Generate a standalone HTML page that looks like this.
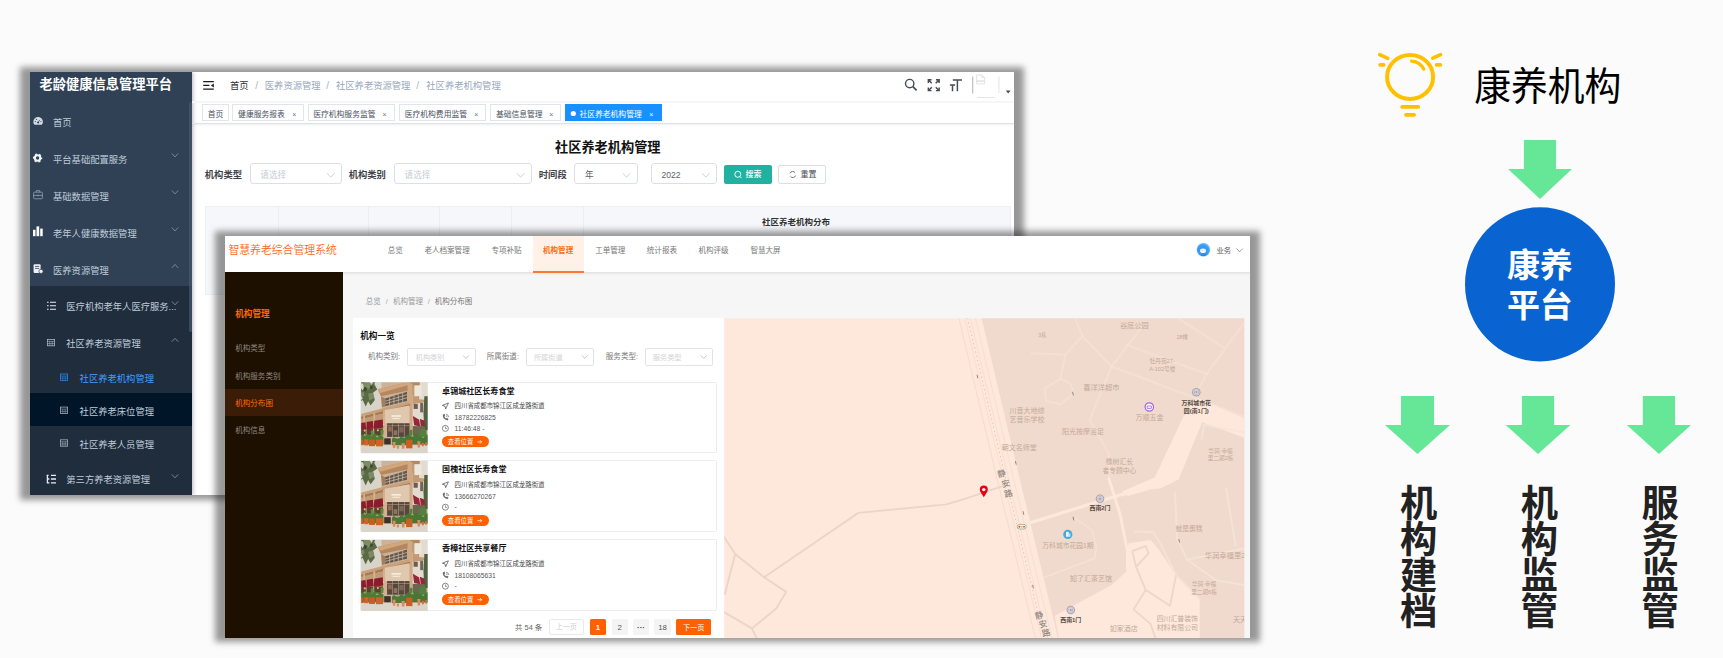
<!DOCTYPE html><html lang="zh-CN"><head><meta charset="utf-8"><title>康养机构</title><style>
*{box-sizing:border-box;margin:0;padding:0}
html,body{width:1723px;height:658px;overflow:hidden;background:#fbfbfb}
body{position:relative;font-family:"Liberation Sans","Noto Sans CJK SC",sans-serif;color:#303133}
.a{position:absolute}
.t{position:absolute;white-space:nowrap;line-height:1;transform:translateY(calc(-50% + .055em))}
.tc{position:absolute;white-space:nowrap;line-height:1;transform:translate(-50%,calc(-50% + .055em))}
.b{font-weight:700}
.sh{position:absolute;background:rgba(0,0,0,.395);filter:blur(3.2px)}
.win{position:absolute;overflow:hidden;background:#fff}
svg{position:absolute;overflow:visible}
</style></head><body>
<div class="sh" style="left:20px;top:67.4px;width:1004px;height:432.2px"></div>
<div class="win" style="left:30px;top:72px;width:984px;height:423px"><div class="a" style="left:-30px;top:-72px;width:1723px;height:658px">
<div class="a" style="left:30px;top:72px;width:161.8px;height:423px;background:#304156;box-shadow:1px 0 4px rgba(0,21,41,.30)"></div>
<div class="a" style="left:30px;top:286px;width:162px;height:209px;background:#1f2d3d"></div>
<div class="a" style="left:30px;top:393px;width:162px;height:33px;background:#001528"></div>
<div class="a" style="left:189px;top:102px;width:3px;height:230px;background:#46566b;border-radius:2px;opacity:.75"></div>
<div class="t b" style="left:39.6px;top:84.3px;font-size:13.25px;color:#fff;">老龄健康信息管理平台</div>
<div class="t" style="left:53px;top:122.5px;font-size:9.3px;color:#bfcbd9;">首页</div>
<div class="t" style="left:53px;top:159.5px;font-size:9.3px;color:#bfcbd9;">平台基础配置服务</div>
<div class="t" style="left:53px;top:196.5px;font-size:9.3px;color:#bfcbd9;">基础数据管理</div>
<div class="t" style="left:53px;top:233.5px;font-size:9.3px;color:#bfcbd9;">老年人健康数据管理</div>
<div class="t" style="left:53px;top:270.5px;font-size:9.3px;color:#bfcbd9;">医养资源管理</div>
<div class="t" style="left:66.3px;top:307.40000000000003px;font-size:9.3px;color:#bfcbd9;">医疗机构老年人医疗服务...</div>
<div class="t" style="left:66.3px;top:344.3px;font-size:9.3px;color:#bfcbd9;">社区养老资源管理</div>
<div class="t" style="left:79.6px;top:379.1px;font-size:9.3px;color:#409eff;">社区养老机构管理</div>
<div class="t" style="left:79.6px;top:412.3px;font-size:9.3px;color:#bfcbd9;">社区养老床位管理</div>
<div class="t" style="left:79.6px;top:445.0px;font-size:9.3px;color:#bfcbd9;">社区养老人员管理</div>
<div class="t" style="left:66.3px;top:480.40000000000003px;font-size:9.3px;color:#bfcbd9;">第三方养老资源管理</div>
<div class="a" style="left:192px;top:101.2px;width:822px;height:2px;background:linear-gradient(#f3f4f5,#f6f7f8)"></div>
<div class="a" style="left:192px;top:123.4px;width:822px;height:1px;background:#dfe2e7;box-shadow:0 1px 2px rgba(0,0,0,.10)"></div>
<div class="t" style="left:230px;top:86.3px;font-size:9.3px;color:#303133;">首页</div>
<div class="t" style="left:255.2px;top:86.3px;font-size:10.2px;color:#aeb3bb;">/</div>
<div class="t" style="left:264.8px;top:86.3px;font-size:9.3px;color:#97a8be;">医养资源管理</div>
<div class="t" style="left:326.2px;top:86.3px;font-size:10.2px;color:#aeb3bb;">/</div>
<div class="t" style="left:336px;top:86.3px;font-size:9.3px;color:#97a8be;">社区养老资源管理</div>
<div class="t" style="left:416.2px;top:86.3px;font-size:10.2px;color:#aeb3bb;">/</div>
<div class="t" style="left:426.3px;top:86.3px;font-size:9.3px;color:#97a8be;">社区养老机构管理</div>
<div class="a" style="left:202px;top:104.2px;width:27px;height:17px;border:1px solid #e1e4ea;background:#fff"></div>
<div class="t" style="left:207.7px;top:113.7px;font-size:7.8px;color:#495060;">首页</div>
<div class="a" style="left:232.4px;top:104.2px;width:72px;height:17px;border:1px solid #e1e4ea;background:#fff"></div>
<div class="t" style="left:238.1px;top:113.7px;font-size:7.8px;color:#495060;">健康服务报表</div>
<div class="t" style="left:292.2px;top:113.9px;font-size:7px;color:#6b7280;">×</div>
<div class="a" style="left:307.5px;top:104.2px;width:87.3px;height:17px;border:1px solid #e1e4ea;background:#fff"></div>
<div class="t" style="left:313.2px;top:113.7px;font-size:7.8px;color:#495060;">医疗机构服务监管</div>
<div class="t" style="left:382.6px;top:113.9px;font-size:7px;color:#6b7280;">×</div>
<div class="a" style="left:399px;top:104.2px;width:87.4px;height:17px;border:1px solid #e1e4ea;background:#fff"></div>
<div class="t" style="left:404.7px;top:113.7px;font-size:7.8px;color:#495060;">医疗机构费用监管</div>
<div class="t" style="left:474.2px;top:113.9px;font-size:7px;color:#6b7280;">×</div>
<div class="a" style="left:490.2px;top:104.2px;width:71.3px;height:17px;border:1px solid #e1e4ea;background:#fff"></div>
<div class="t" style="left:495.9px;top:113.7px;font-size:7.8px;color:#495060;">基础信息管理</div>
<div class="t" style="left:549.3px;top:113.9px;font-size:7px;color:#6b7280;">×</div>
<div class="a" style="left:565px;top:104.2px;width:96.8px;height:17px;background:#1890ff"></div>
<div class="t" style="left:579.4px;top:113.7px;font-size:7.8px;color:#fff;">社区养老机构管理</div>
<div class="t" style="left:649.2px;top:113.9px;font-size:7px;color:#fff;">×</div>
<div class="tc b" style="left:607.8px;top:146.8px;font-size:13.2px;color:#111;">社区养老机构管理</div>
<div class="t b" style="left:204.8px;top:174.7px;font-size:9.3px;color:#3f4349;">机构类型</div>
<div class="a" style="left:250.2px;top:163.4px;width:91.8px;height:21px;border:1px solid #dcdfe6;border-radius:3px;background:#fff"></div>
<div class="t" style="left:260.3px;top:174.8px;font-size:8.6px;color:#c8ccd4;">请选择</div>
<div class="t b" style="left:348.7px;top:174.7px;font-size:9.3px;color:#3f4349;">机构类别</div>
<div class="a" style="left:394.1px;top:163.4px;width:137.7px;height:21px;border:1px solid #dcdfe6;border-radius:3px;background:#fff"></div>
<div class="t" style="left:404.6px;top:174.8px;font-size:8.6px;color:#c8ccd4;">请选择</div>
<div class="t b" style="left:538.8px;top:174.7px;font-size:9.3px;color:#3f4349;">时间段</div>
<div class="a" style="left:574.4px;top:163.4px;width:63.3px;height:21px;border:1px solid #dcdfe6;border-radius:3px;background:#fff"></div>
<div class="t" style="left:584.9px;top:174.8px;font-size:8.6px;color:#606266;">年</div>
<div class="a" style="left:651.3px;top:163.4px;width:65.7px;height:21px;border:1px solid #dcdfe6;border-radius:3px;background:#fff"></div>
<div class="t" style="left:661.4px;top:174.8px;font-size:8.6px;color:#606266;">2022</div>
<div class="a" style="left:723.6px;top:165px;width:48.2px;height:18.8px;background:#21b1a0;border-radius:2px"></div>
<div class="t" style="left:745.6px;top:174.6px;font-size:8px;color:#fff;font-weight:500">搜索</div>
<div class="a" style="left:778.1px;top:165px;width:48.2px;height:18.8px;background:#fff;border:1px solid #dcdfe6;border-radius:2px"></div>
<div class="t" style="left:800.4px;top:174.6px;font-size:8px;color:#4a4d52;">重置</div>
<div class="a" style="left:205.2px;top:206.2px;width:805.6px;height:88.6px;background:#f5f7fa;border:1px solid #eef0f5"></div>
<div class="a" style="left:278.3px;top:206.2px;width:1px;height:88.6px;background:#ebeef5"></div>
<div class="a" style="left:367.7px;top:206.2px;width:1px;height:88.6px;background:#ebeef5"></div>
<div class="a" style="left:439.3px;top:206.2px;width:1px;height:88.6px;background:#ebeef5"></div>
<div class="a" style="left:510.5px;top:206.2px;width:1px;height:88.6px;background:#ebeef5"></div>
<div class="a" style="left:582.5px;top:206.2px;width:1px;height:88.6px;background:#ebeef5"></div>
<div class="tc b" style="left:796px;top:222px;font-size:8.5px;color:#303133;">社区养老机构分布</div>
<svg class="a" style="left:0;top:0" width="1723" height="658" viewBox="0 0 1723 658"><path d="M171.8,153.5 L175,156.89999999999998 L178.2,153.5" fill="none" stroke="#8d99a8" stroke-width="0.8"/><path d="M171.8,190.5 L175,193.89999999999998 L178.2,190.5" fill="none" stroke="#8d99a8" stroke-width="0.8"/><path d="M171.8,227.5 L175,230.89999999999998 L178.2,227.5" fill="none" stroke="#8d99a8" stroke-width="0.8"/><path d="M171.8,267.9 L175,264.5 L178.2,267.9" fill="none" stroke="#8d99a8" stroke-width="0.8"/><path d="M171.8,301.40000000000003 L175,304.8 L178.2,301.40000000000003" fill="none" stroke="#8d99a8" stroke-width="0.8"/><path d="M171.8,341.7 L175,338.3 L178.2,341.7" fill="none" stroke="#8d99a8" stroke-width="0.8"/><path d="M171.8,474.40000000000003 L175,477.8 L178.2,474.40000000000003" fill="none" stroke="#8d99a8" stroke-width="0.8"/><path d="M33.3,122 a4.8,5 0 0 1 9.6,0 q0,1.6 -1.2,2.8 h-7.2 q-1.2,-1.2 -1.2,-2.8 z" fill="#d3dbe5"/><circle cx="38.1" cy="122.4" r="1" fill="#304156"/><path d="M38.1,122.4 l1.8,-2.6" stroke="#304156" stroke-width=".7"/><circle cx="35.3" cy="121.6" r=".55" fill="#304156"/><circle cx="36.4" cy="119.4" r=".55" fill="#304156"/><circle cx="40.9" cy="121.6" r=".55" fill="#304156"/><circle cx="37.6" cy="158" r="2.7" fill="none" stroke="#eef2f6" stroke-width="2.1"/><circle cx="37.6" cy="158" r="4" fill="none" stroke="#eef2f6" stroke-width="1.3" stroke-dasharray="2.1 2.09" stroke-dashoffset="1"/><rect x="33.6" y="192.2" width="8.8" height="6.6" rx="1" fill="none" stroke="#93a1b3" stroke-width=".8"/><path d="M36.2,192.2 v-1.5 h3.6 v1.5 M33.6,195.4 h8.8 M38,194.5 v1.8" fill="none" stroke="#93a1b3" stroke-width=".8"/><rect x="33" y="229.8" width="2.5" height="6.4" fill="#fff"/><rect x="36.5" y="226.4" width="2.7" height="9.8" fill="#fff"/><rect x="40.2" y="228.6" width="2.5" height="7.6" fill="#fff"/><rect x="33.6" y="264.2" width="7" height="8.8" rx="1" fill="#eef2f6"/><path d="M35,266.4 h4.2 M35,268.4 h4.2" stroke="#304156" stroke-width=".8"/><circle cx="41" cy="271.4" r="2.1" fill="#eef2f6" stroke="#304156" stroke-width=".7"/><path d="M47,302.3 h1.6 M47,305.8 h1.6 M47,309.3 h1.6 M50,302.3 h6 M50,305.8 h6 M50,309.3 h6" stroke="#e6ebf1" stroke-width="1.1"/><rect x="47.4" y="339.40000000000003" width="7.2" height="6.4" fill="none" stroke="#aab6c4" stroke-width=".8"/><path d="M47.4,341.40000000000003 h7.2 M49.8,341.40000000000003 v4.4 M52.2,341.40000000000003 v4.4 M47.4,343.6 h7.2" stroke="#aab6c4" stroke-width=".6" fill="none"/><rect x="60.4" y="374.0" width="7.2" height="6.4" fill="none" stroke="#2f86e0" stroke-width=".8"/><path d="M60.4,376.0 h7.2 M62.8,376.0 v4.4 M65.2,376.0 v4.4 M60.4,378.2 h7.2" stroke="#2f86e0" stroke-width=".6" fill="none"/><rect x="60.4" y="407.1" width="7.2" height="6.4" fill="none" stroke="#9eabb9" stroke-width=".8"/><path d="M60.4,409.1 h7.2 M62.8,409.1 v4.4 M65.2,409.1 v4.4 M60.4,411.3 h7.2" stroke="#9eabb9" stroke-width=".6" fill="none"/><rect x="60.4" y="439.8" width="7.2" height="6.4" fill="none" stroke="#9eabb9" stroke-width=".8"/><path d="M60.4,441.8 h7.2 M62.8,441.8 v4.4 M65.2,441.8 v4.4 M60.4,444 h7.2" stroke="#9eabb9" stroke-width=".6" fill="none"/><path d="M46.6,475.3 h2 M47.4,475.3 v7.6 h2 M47.4,479 h2 M51,475.3 h5 M51,479 h5 M51,482.8 h5" stroke="#e6ebf1" stroke-width="1.3" fill="none"/><path d="M203.2,81.7 h10.6 M203.2,85.4 h6.2 M203.2,89.1 h10.6" stroke="#1a1a1a" stroke-width="1.3" fill="none"/><path d="M213.8,83.4 l-2.9,2 l2.9,2 z" fill="#1a1a1a"/><circle cx="909.7" cy="83.6" r="4.2" fill="none" stroke="#474c57" stroke-width="1.4"/><path d="M912.9,86.7 l3.7,3.6" stroke="#474c57" stroke-width="1.7"/><path d="M931.75,83.2 L928.55,80.0 M928.35,83.0 V79.8 H931.55 M935.75,83.2 L938.95,80.0 M939.15,83.0 V79.8 H935.95 M935.75,87.2 L938.95,90.4 M939.15,87.4 V90.60000000000001 H935.95 M931.75,87.2 L928.55,90.4 M928.35,87.4 V90.60000000000001 H931.55" stroke="#474c57" stroke-width="1.45" fill="none"/><path d="M952.8,80 h9.2 M957.4,80 v11.2 M949.9,85.1 h5.2 M952.5,85.1 v6.1" stroke="#474c57" stroke-width="1.5" fill="none"/><path d="M972.7,76.4 v17" stroke="#b9b9b9" stroke-width="1.1"/><path d="M998.9,76.4 v16.6" stroke="#e6e6e6" stroke-width="1.1"/><path d="M977.5,97.5 h17" stroke="#dedede" stroke-width=".8"/><path d="M976.6,75 h5.4 l2.6,2.6 v3.4 h-8 z M976.6,81.2 h8 v2.6 h-8 z M982,75 v2.6 h2.6" fill="none" stroke="#dcdcdc" stroke-width=".8"/><path d="M1005.8,90.5 h4.8 l-2.4,3 z" fill="#3f4a63"/><circle cx="573.3" cy="113.5" r="2.6" fill="#fff"/><path d="M327.12,173.24499999999998 L330.8,177.155 L334.48,173.24499999999998" fill="none" stroke="#c0c4cc" stroke-width="0.8"/><path d="M516.92,173.24499999999998 L520.5999999999999,177.155 L524.2799999999999,173.24499999999998" fill="none" stroke="#c0c4cc" stroke-width="0.8"/><path d="M622.8199999999999,173.24499999999998 L626.4999999999999,177.155 L630.1799999999998,173.24499999999998" fill="none" stroke="#c0c4cc" stroke-width="0.8"/><path d="M702.12,173.24499999999998 L705.8,177.155 L709.4799999999999,173.24499999999998" fill="none" stroke="#c0c4cc" stroke-width="0.8"/><circle cx="737.8" cy="174.3" r="3" fill="none" stroke="#fff" stroke-width=".95"/><path d="M740,176.5 l1.6,1.6" stroke="#fff" stroke-width=".95"/><path d="M790,173.4 a2.9,2.9 0 0 1 5.2,-.6 M795.6,175.6 a2.9,2.9 0 0 1 -5.2,.6" fill="none" stroke="#555" stroke-width=".8"/></svg>
</div></div>
<div class="sh" style="left:215px;top:230.9px;width:1045px;height:411.5px"></div>
<div class="win" style="left:225px;top:235.5px;width:1025px;height:402.3px;background:#f6f6f6"><div class="a" style="left:-225px;top:-235.5px;width:1723px;height:658px">
<div class="a" style="left:225px;top:272.4px;width:118.3px;height:366px;background:#1e1000"></div>
<div class="a" style="left:225px;top:389.2px;width:118.2px;height:27.3px;background:#3b1d07"></div>
<div class="t b" style="left:235.2px;top:314.2px;font-size:8.6px;color:#ff6a00;">机构管理</div>
<div class="t" style="left:235.2px;top:348.3px;font-size:7.55px;color:#8f8880;">机构类型</div>
<div class="t" style="left:235.2px;top:375.6px;font-size:7.55px;color:#8f8880;">机构服务类别</div>
<div class="t" style="left:235.2px;top:403.1px;font-size:7.55px;color:#ff6a00;">机构分布图</div>
<div class="t" style="left:235.2px;top:430.4px;font-size:7.55px;color:#8f8880;">机构信息</div>
<div class="a" style="left:225px;top:235.5px;width:1025px;height:36.9px;background:#fff;box-shadow:0 1px 3px rgba(0,0,0,.12)"></div>
<div class="t" style="left:228.4px;top:250px;font-size:10.85px;color:#ff6410;font-weight:350">智慧养老综合管理系统</div>
<div class="a" style="left:532.8px;top:235.5px;width:51.5px;height:37.5px;background:#fff1e8;border-bottom:2px solid #fb7a32"></div>
<div class="t" style="left:387.8px;top:249.8px;font-size:7.55px;color:#777;">总览</div>
<div class="t" style="left:424.4px;top:249.8px;font-size:7.55px;color:#777;">老人档案管理</div>
<div class="t" style="left:491.4px;top:249.8px;font-size:7.55px;color:#777;">专项补贴</div>
<div class="t b" style="left:543px;top:249.8px;font-size:7.55px;color:#ff6a00;">机构管理</div>
<div class="t" style="left:595.2px;top:249.8px;font-size:7.55px;color:#777;">工单管理</div>
<div class="t" style="left:646.8px;top:249.8px;font-size:7.55px;color:#777;">统计报表</div>
<div class="t" style="left:698.4px;top:249.8px;font-size:7.55px;color:#777;">机构评级</div>
<div class="t" style="left:750.4px;top:249.8px;font-size:7.55px;color:#777;">智慧大屏</div>
<div class="t" style="left:1216.4px;top:249.9px;font-size:7.4px;color:#555;">业务</div>
<div class="t" style="left:365.8px;top:300.7px;font-size:7.5px;color:#999;">总览</div>
<div class="t" style="left:385.8px;top:300.7px;font-size:7.5px;color:#aaa;">/</div>
<div class="t" style="left:393px;top:300.7px;font-size:7.5px;color:#999;">机构管理</div>
<div class="t" style="left:427.7px;top:300.7px;font-size:7.5px;color:#aaa;">/</div>
<div class="t" style="left:434.7px;top:300.7px;font-size:7.5px;color:#777;">机构分布图</div>
<div class="a" style="left:353px;top:318.2px;width:371.2px;height:320px;background:#fff"></div>
<div class="t b" style="left:360.2px;top:336.1px;font-size:8.65px;color:#111;">机构一览</div>
<div class="t" style="left:367.9px;top:356.4px;font-size:7.55px;color:#777;">机构类别:</div>
<div class="a" style="left:407.4px;top:348.2px;width:68.2px;height:17.4px;border:1px solid #e3e3e3;border-radius:2px;background:#fff"></div>
<div class="t" style="left:415.7px;top:356.6px;font-size:7.2px;color:#d4d4d4;">机构类别</div>
<div class="t" style="left:486.7px;top:356.4px;font-size:7.55px;color:#777;">所属街道:</div>
<div class="a" style="left:525.6px;top:348.2px;width:68.8px;height:17.4px;border:1px solid #e3e3e3;border-radius:2px;background:#fff"></div>
<div class="t" style="left:533.9px;top:356.6px;font-size:7.2px;color:#d4d4d4;">所属街道</div>
<div class="t" style="left:605.8px;top:356.4px;font-size:7.55px;color:#777;">服务类型:</div>
<div class="a" style="left:644.5px;top:348.2px;width:68.8px;height:17.4px;border:1px solid #e3e3e3;border-radius:2px;background:#fff"></div>
<div class="t" style="left:652.8px;top:356.6px;font-size:7.2px;color:#d4d4d4;">服务类型</div>
<div class="a" style="left:360.4px;top:381.6px;width:356.2px;height:71.8px;border:1px solid #ececec;border-radius:1.5px;background:#fff"></div>
<div class="t b" style="left:442.1px;top:391.6px;font-size:8.05px;color:#111;">卓锦城社区长寿食堂</div>
<div class="t" style="left:454.6px;top:406.1px;font-size:6.43px;color:#444;">四川省成都市锦江区成龙路街道</div>
<div class="t" style="left:454.6px;top:417.8px;font-size:6.72px;color:#555;">18782226825</div>
<div class="t" style="left:454.6px;top:428.5px;font-size:6.75px;color:#555;">11:46:48 -</div>
<div class="a" style="left:442.1px;top:436.0px;width:46.9px;height:11.4px;border-radius:6px;background:#ff6000"></div>
<div class="t" style="left:447.8px;top:441.8px;font-size:6.4px;color:#fff;">查看位置</div>
<div class="a" style="left:360.4px;top:460.4px;width:356.2px;height:71.8px;border:1px solid #ececec;border-radius:1.5px;background:#fff"></div>
<div class="t b" style="left:442.1px;top:470.4px;font-size:8.05px;color:#111;">国槐社区长寿食堂</div>
<div class="t" style="left:454.6px;top:484.9px;font-size:6.43px;color:#444;">四川省成都市锦江区成龙路街道</div>
<div class="t" style="left:454.6px;top:496.59999999999997px;font-size:6.72px;color:#555;">13666270267</div>
<div class="t" style="left:454.6px;top:507.29999999999995px;font-size:6.75px;color:#555;">-</div>
<div class="a" style="left:442.1px;top:514.8px;width:46.9px;height:11.4px;border-radius:6px;background:#ff6000"></div>
<div class="t" style="left:447.8px;top:520.6px;font-size:6.4px;color:#fff;">查看位置</div>
<div class="a" style="left:360.4px;top:539.4px;width:356.2px;height:71.8px;border:1px solid #ececec;border-radius:1.5px;background:#fff"></div>
<div class="t b" style="left:442.1px;top:549.4px;font-size:8.05px;color:#111;">香樟社区共享餐厅</div>
<div class="t" style="left:454.6px;top:563.9px;font-size:6.43px;color:#444;">四川省成都市锦江区成龙路街道</div>
<div class="t" style="left:454.6px;top:575.6px;font-size:6.72px;color:#555;">18108065631</div>
<div class="t" style="left:454.6px;top:586.3px;font-size:6.75px;color:#555;">-</div>
<div class="a" style="left:442.1px;top:593.8px;width:46.9px;height:11.4px;border-radius:6px;background:#ff6000"></div>
<div class="t" style="left:447.8px;top:599.6px;font-size:6.4px;color:#fff;">查看位置</div>
<div class="t" style="left:515.1px;top:626.9px;font-size:7.4px;color:#666;">共 54 条</div>
<div class="a" style="left:548.9px;top:619px;width:34.8px;height:16px;border:1px solid #e9e9e9;border-radius:2px;background:#fff"></div>
<div class="tc" style="left:566.3px;top:627.1px;font-size:7.1px;color:#cfcfcf;">上一页</div>
<div class="a" style="left:589.6px;top:619px;width:16.4px;height:16px;border-radius:1.5px;background:#ff6000"></div>
<div class="tc b" style="left:597.8000000000001px;top:627.1px;font-size:7.8px;color:#fff;">1</div>
<div class="a" style="left:611.6px;top:619px;width:16.2px;height:16px;border-radius:1.5px;background:#f4f4f5"></div>
<div class="tc" style="left:619.7px;top:627.1px;font-size:7.8px;color:#555;">2</div>
<div class="a" style="left:632.8px;top:619px;width:16.4px;height:16px;border-radius:1.5px;background:#f4f4f5"></div>
<div class="tc b" style="left:641.0px;top:627.1px;font-size:7.8px;color:#444;">···</div>
<div class="a" style="left:654.4px;top:619px;width:16.4px;height:16px;border-radius:1.5px;background:#f4f4f5"></div>
<div class="tc" style="left:662.6px;top:627.1px;font-size:7.8px;color:#555;">18</div>
<div class="a" style="left:676.3px;top:619px;width:34.8px;height:16px;border-radius:1.5px;background:#ff6000"></div>
<div class="tc" style="left:693.7px;top:627.1px;font-size:7.2px;color:#fff;">下一页</div>
<svg class="a" style="left:0;top:0" width="1723" height="658" viewBox="0 0 1723 658"><defs><radialGradient id="av" cx=".45" cy=".55" r=".6"><stop offset="0" stop-color="#2f8ff0"/><stop offset=".7" stop-color="#3d9df5"/><stop offset="1" stop-color="#8fd3ff"/></radialGradient></defs><circle cx="1203.5" cy="249.7" r="7.6" fill="#f6f8fb"/><circle cx="1203.5" cy="249.7" r="6.7" fill="url(#av)"/><ellipse cx="1203" cy="250.7" rx="3" ry="2.3" fill="#f4f8ff"/><path d="M1200.2,254 q3,1.6 6,-.2 l-.8,1.4 q-2.2,1 -4.2,0 z" fill="#2476d8"/><path d="M1201.4,250.4 h1 M1203.8,250.4 h1" stroke="#9db9e8" stroke-width=".5"/><path d="M1236.56,248.58499999999998 L1239.6,251.815 L1242.6399999999999,248.58499999999998" fill="none" stroke="#888" stroke-width="0.8"/><path d="M463.11999999999995,355.37 L465.99999999999994,358.42999999999995 L468.87999999999994,355.37" fill="none" stroke="#b9b9b9" stroke-width="0.8"/><path d="M581.92,355.37 L584.8,358.42999999999995 L587.68,355.37" fill="none" stroke="#b9b9b9" stroke-width="0.8"/><path d="M700.8199999999999,355.37 L703.6999999999999,358.42999999999995 L706.5799999999999,355.37" fill="none" stroke="#b9b9b9" stroke-width="0.8"/><defs><filter id="pb" x="-5%" y="-5%" width="110%" height="110%"><feGaussianBlur stdDeviation="3.2"/></filter><clipPath id="pc"><rect x="42" y="35" width="548" height="583"/></clipPath></defs><g transform="translate(361.1,382.3) scale(0.12158) translate(-42,-35)"><g clip-path="url(#pc)"><g filter="url(#pb)">
<rect x="20" y="10" width="600" height="640" fill="#cbb298"/>
<rect x="20" y="10" width="190" height="300" fill="#d9d4c9"/>
<rect x="455" y="10" width="160" height="420" fill="#e2dbcf"/>
<path d="M20,10 H170 L150,50 175,95 140,120 155,180 120,225 100,190 80,235 55,180 20,205 z" fill="#5a6a46"/><path d="M20,60 l30,-20 25,30 -20,30z M110,20 l30,10 -10,30 -25,-5z M20,150 l25,-10 10,30 -20,15z" fill="#d9d4c9"/>
<path d="M60,40 l40,-20 30,35 -25,40 -40,5 z M100,130 l40,-10 10,45 -40,20z M40,120 l25,-5 5,30 -25,10z" fill="#7e8c63"/>
<path d="M70,70 l25,15 -15,25 -20,-10z M120,60 l20,10 -8,22 -18,-8z" fill="#3a4a30"/>
<path d="M178,92 L445,30 H525 L518,178 L425,105 L205,150 z" fill="#b5875f"/>
<path d="M178,92 L445,30 L452,52 L200,122 z" fill="#d2a67d"/>
<path d="M240,168 L420,112 V188 L240,232 z" fill="#62574e"/>
<path d="M240,190 L420,137 M240,211 L420,163 M276,157 V224 M312,146 V215 M348,135 V206 M384,124 V197" stroke="#cdbca6" stroke-width="6"/>
<path d="M205,150 L240,168 V232 L215,240 z" fill="#a87c58"/>
<path d="M424,45 h42 V470 h-42 z" fill="#cfa985"/>
<path d="M466,40 L520,175 L560,178 V200 L466,215 z" fill="#c39a73"/>
<rect x="474" y="214" width="34" height="40" fill="#6d5b4e"/><rect x="528" y="204" width="24" height="78" fill="#75645a"/>
<rect x="480" y="60" width="60" height="90" fill="#ece6db"/>
<path d="M562,150 h40 v280 h-40 q-14,-140 0,-280z" fill="#4f6240"/>
<path d="M30,298 L430,194 L445,214 L30,320 z" fill="#c9a078"/>
<path d="M30,320 L445,214 V232 L30,345 z" fill="#a67a56"/>
<path d="M235,262 L440,226 V372 H235 z" fill="#dfc8ad"/>
<rect x="292" y="306" width="78" height="13" fill="#f6efe4"/><rect x="300" y="328" width="60" height="10" fill="#f2e9dc"/>
<path d="M30,340 L235,290 V470 H30 z" fill="#c29a76"/>
<path d="M60,310 l14,-4 v160 h-14z M142,292 l16,-4 v180 h-16z M222,272 l16,-4 v200 h-16z" fill="#d5b08c"/>
<path d="M30,372 l48,-8 6,58 H30 z M88,362 l52,-9 4,62 -58,8 z M150,352 l70,-12 4,68 -78,12 z" fill="#8b1e2f"/>
<path d="M30,420 h50 v50 h-50z M88,420 h52 v48 h-52z M150,416 h72 v52 h-72z" fill="#5b4033"/>
<circle cx="72" cy="432" r="9" fill="#e9b36a"/><circle cx="180" cy="430" r="9" fill="#e9b36a"/><circle cx="228" cy="380" r="7" fill="#f0c27a"/>
<rect x="256" y="372" width="184" height="112" fill="#56463c"/>
<path d="M256,392 h184 M300,372 v112 M350,372 v112 M398,372 v112" stroke="#a8927c" stroke-width="6"/>
<rect x="264" y="400" width="30" height="40" fill="#9a6a4c"/><rect x="356" y="404" width="36" height="44" fill="#7d6654"/><rect x="310" y="430" width="30" height="40" fill="#8a7462"/>
<path d="M468,312 l52,30 8,56 -50,-10 z M526,336 l36,14 10,52 -40,-6 z" fill="#98283a"/>
<rect x="466" y="395" width="100" height="80" fill="#6a6650"/>
<rect x="20" y="552" width="600" height="90" fill="#dad4cb"/>
<path d="M30,480 q20,-24 46,-4 q20,-28 48,-2 q24,-30 56,-4 q24,-10 46,14 v60 H30 z" fill="#4e7a35"/>
<path d="M120,440 q14,-22 26,0 l-4,40 h-18z M200,430 q16,-16 28,4 l-4,36 h-20z" fill="#5d8a40"/>
<path d="M296,500 q16,-22 34,-2 q10,-14 24,0 q14,-26 38,-6 q14,-10 20,10 v50 h-116z" fill="#4c7a38"/>
<path d="M404,486 q24,-40 58,-8 q20,-30 50,-4 q26,-34 60,-8 q20,-6 30,10 v70 H404 z" fill="#4a7636"/>
<path d="M440,440 q10,-30 24,-4 l-2,40 h-20z M520,430 q30,-30 60,0 v50 h-60z" fill="#55803c"/>
<path d="M60,470 l10,-14 12,14z M160,486 l14,-16 14,16z M450,480 l14,-18 14,18z M540,492 l12,-14 12,14z M330,500 l10,-12 10,12z" fill="#8fb562"/>
<rect x="30" y="506" width="32" height="46" fill="#c75a20"/><rect x="68" y="504" width="34" height="50" fill="#d0642a"/><rect x="108" y="506" width="48" height="54" fill="#c85c22"/><rect x="164" y="506" width="58" height="56" fill="#cf6228"/>
<rect x="232" y="496" width="54" height="50" fill="#3a322c"/>
<path d="M300,526 h26 l-4,50 h-18z M374,536 h28 l-4,46 h-20z M334,556 h22 l-3,26 h-16z" fill="#de8a5e"/>
<rect x="412" y="508" width="52" height="70" fill="#cb5f24"/>
<path d="M504,520 h26 l-4,52 h-18z" fill="#dd875a"/><path d="M540,534 h20 l-3,28 h-14z M566,530 h20 l-3,26 h-14z" fill="#cf6d3c"/>
</g></g></g><path d="M448.4,403.0 l-6,2.4 2.6,.8 .7,2.7 z" fill="none" stroke="#444" stroke-width=".7" stroke-linejoin="round"/><path d="M442.79999999999995,414.8 q-.5,4 4.6,5.6 l1.2,-1.4 -1.6,-1.1 -.9,.6 q-1.4,-.8 -1.7,-2.4 l.8,-.6 -.8,-1.7 z" fill="#6a6a6a"/><path d="M446.0,414.40000000000003 a3,3 0 0 1 2.8,2.8 M446.0,416.0 a1.4,1.4 0 0 1 1.3,1.3" fill="none" stroke="#555" stroke-width=".6"/><circle cx="445.4" cy="428.40000000000003" r="3" fill="none" stroke="#555" stroke-width=".7"/><path d="M445.4,426.6 v2 h1.6" fill="none" stroke="#555" stroke-width=".6"/><path d="M477.4,441.90000000000003 h4.2 M480,440.20000000000005 l1.7,1.7 -1.7,1.7" fill="none" stroke="#fff" stroke-width=".7"/><g transform="translate(361.1,461.1) scale(0.12158) translate(-42,-35)"><g clip-path="url(#pc)"><g filter="url(#pb)">
<rect x="20" y="10" width="600" height="640" fill="#cbb298"/>
<rect x="20" y="10" width="190" height="300" fill="#d9d4c9"/>
<rect x="455" y="10" width="160" height="420" fill="#e2dbcf"/>
<path d="M20,10 H170 L150,50 175,95 140,120 155,180 120,225 100,190 80,235 55,180 20,205 z" fill="#5a6a46"/><path d="M20,60 l30,-20 25,30 -20,30z M110,20 l30,10 -10,30 -25,-5z M20,150 l25,-10 10,30 -20,15z" fill="#d9d4c9"/>
<path d="M60,40 l40,-20 30,35 -25,40 -40,5 z M100,130 l40,-10 10,45 -40,20z M40,120 l25,-5 5,30 -25,10z" fill="#7e8c63"/>
<path d="M70,70 l25,15 -15,25 -20,-10z M120,60 l20,10 -8,22 -18,-8z" fill="#3a4a30"/>
<path d="M178,92 L445,30 H525 L518,178 L425,105 L205,150 z" fill="#b5875f"/>
<path d="M178,92 L445,30 L452,52 L200,122 z" fill="#d2a67d"/>
<path d="M240,168 L420,112 V188 L240,232 z" fill="#62574e"/>
<path d="M240,190 L420,137 M240,211 L420,163 M276,157 V224 M312,146 V215 M348,135 V206 M384,124 V197" stroke="#cdbca6" stroke-width="6"/>
<path d="M205,150 L240,168 V232 L215,240 z" fill="#a87c58"/>
<path d="M424,45 h42 V470 h-42 z" fill="#cfa985"/>
<path d="M466,40 L520,175 L560,178 V200 L466,215 z" fill="#c39a73"/>
<rect x="474" y="214" width="34" height="40" fill="#6d5b4e"/><rect x="528" y="204" width="24" height="78" fill="#75645a"/>
<rect x="480" y="60" width="60" height="90" fill="#ece6db"/>
<path d="M562,150 h40 v280 h-40 q-14,-140 0,-280z" fill="#4f6240"/>
<path d="M30,298 L430,194 L445,214 L30,320 z" fill="#c9a078"/>
<path d="M30,320 L445,214 V232 L30,345 z" fill="#a67a56"/>
<path d="M235,262 L440,226 V372 H235 z" fill="#dfc8ad"/>
<rect x="292" y="306" width="78" height="13" fill="#f6efe4"/><rect x="300" y="328" width="60" height="10" fill="#f2e9dc"/>
<path d="M30,340 L235,290 V470 H30 z" fill="#c29a76"/>
<path d="M60,310 l14,-4 v160 h-14z M142,292 l16,-4 v180 h-16z M222,272 l16,-4 v200 h-16z" fill="#d5b08c"/>
<path d="M30,372 l48,-8 6,58 H30 z M88,362 l52,-9 4,62 -58,8 z M150,352 l70,-12 4,68 -78,12 z" fill="#8b1e2f"/>
<path d="M30,420 h50 v50 h-50z M88,420 h52 v48 h-52z M150,416 h72 v52 h-72z" fill="#5b4033"/>
<circle cx="72" cy="432" r="9" fill="#e9b36a"/><circle cx="180" cy="430" r="9" fill="#e9b36a"/><circle cx="228" cy="380" r="7" fill="#f0c27a"/>
<rect x="256" y="372" width="184" height="112" fill="#56463c"/>
<path d="M256,392 h184 M300,372 v112 M350,372 v112 M398,372 v112" stroke="#a8927c" stroke-width="6"/>
<rect x="264" y="400" width="30" height="40" fill="#9a6a4c"/><rect x="356" y="404" width="36" height="44" fill="#7d6654"/><rect x="310" y="430" width="30" height="40" fill="#8a7462"/>
<path d="M468,312 l52,30 8,56 -50,-10 z M526,336 l36,14 10,52 -40,-6 z" fill="#98283a"/>
<rect x="466" y="395" width="100" height="80" fill="#6a6650"/>
<rect x="20" y="552" width="600" height="90" fill="#dad4cb"/>
<path d="M30,480 q20,-24 46,-4 q20,-28 48,-2 q24,-30 56,-4 q24,-10 46,14 v60 H30 z" fill="#4e7a35"/>
<path d="M120,440 q14,-22 26,0 l-4,40 h-18z M200,430 q16,-16 28,4 l-4,36 h-20z" fill="#5d8a40"/>
<path d="M296,500 q16,-22 34,-2 q10,-14 24,0 q14,-26 38,-6 q14,-10 20,10 v50 h-116z" fill="#4c7a38"/>
<path d="M404,486 q24,-40 58,-8 q20,-30 50,-4 q26,-34 60,-8 q20,-6 30,10 v70 H404 z" fill="#4a7636"/>
<path d="M440,440 q10,-30 24,-4 l-2,40 h-20z M520,430 q30,-30 60,0 v50 h-60z" fill="#55803c"/>
<path d="M60,470 l10,-14 12,14z M160,486 l14,-16 14,16z M450,480 l14,-18 14,18z M540,492 l12,-14 12,14z M330,500 l10,-12 10,12z" fill="#8fb562"/>
<rect x="30" y="506" width="32" height="46" fill="#c75a20"/><rect x="68" y="504" width="34" height="50" fill="#d0642a"/><rect x="108" y="506" width="48" height="54" fill="#c85c22"/><rect x="164" y="506" width="58" height="56" fill="#cf6228"/>
<rect x="232" y="496" width="54" height="50" fill="#3a322c"/>
<path d="M300,526 h26 l-4,50 h-18z M374,536 h28 l-4,46 h-20z M334,556 h22 l-3,26 h-16z" fill="#de8a5e"/>
<rect x="412" y="508" width="52" height="70" fill="#cb5f24"/>
<path d="M504,520 h26 l-4,52 h-18z" fill="#dd875a"/><path d="M540,534 h20 l-3,28 h-14z M566,530 h20 l-3,26 h-14z" fill="#cf6d3c"/>
</g></g></g><path d="M448.4,481.79999999999995 l-6,2.4 2.6,.8 .7,2.7 z" fill="none" stroke="#444" stroke-width=".7" stroke-linejoin="round"/><path d="M442.79999999999995,493.59999999999997 q-.5,4 4.6,5.6 l1.2,-1.4 -1.6,-1.1 -.9,.6 q-1.4,-.8 -1.7,-2.4 l.8,-.6 -.8,-1.7 z" fill="#6a6a6a"/><path d="M446.0,493.2 a3,3 0 0 1 2.8,2.8 M446.0,494.79999999999995 a1.4,1.4 0 0 1 1.3,1.3" fill="none" stroke="#555" stroke-width=".6"/><circle cx="445.4" cy="507.2" r="3" fill="none" stroke="#555" stroke-width=".7"/><path d="M445.4,505.4 v2 h1.6" fill="none" stroke="#555" stroke-width=".6"/><path d="M477.4,520.6999999999999 h4.2 M480,519.0 l1.7,1.7 -1.7,1.7" fill="none" stroke="#fff" stroke-width=".7"/><g transform="translate(361.1,540.1) scale(0.12158) translate(-42,-35)"><g clip-path="url(#pc)"><g filter="url(#pb)">
<rect x="20" y="10" width="600" height="640" fill="#cbb298"/>
<rect x="20" y="10" width="190" height="300" fill="#d9d4c9"/>
<rect x="455" y="10" width="160" height="420" fill="#e2dbcf"/>
<path d="M20,10 H170 L150,50 175,95 140,120 155,180 120,225 100,190 80,235 55,180 20,205 z" fill="#5a6a46"/><path d="M20,60 l30,-20 25,30 -20,30z M110,20 l30,10 -10,30 -25,-5z M20,150 l25,-10 10,30 -20,15z" fill="#d9d4c9"/>
<path d="M60,40 l40,-20 30,35 -25,40 -40,5 z M100,130 l40,-10 10,45 -40,20z M40,120 l25,-5 5,30 -25,10z" fill="#7e8c63"/>
<path d="M70,70 l25,15 -15,25 -20,-10z M120,60 l20,10 -8,22 -18,-8z" fill="#3a4a30"/>
<path d="M178,92 L445,30 H525 L518,178 L425,105 L205,150 z" fill="#b5875f"/>
<path d="M178,92 L445,30 L452,52 L200,122 z" fill="#d2a67d"/>
<path d="M240,168 L420,112 V188 L240,232 z" fill="#62574e"/>
<path d="M240,190 L420,137 M240,211 L420,163 M276,157 V224 M312,146 V215 M348,135 V206 M384,124 V197" stroke="#cdbca6" stroke-width="6"/>
<path d="M205,150 L240,168 V232 L215,240 z" fill="#a87c58"/>
<path d="M424,45 h42 V470 h-42 z" fill="#cfa985"/>
<path d="M466,40 L520,175 L560,178 V200 L466,215 z" fill="#c39a73"/>
<rect x="474" y="214" width="34" height="40" fill="#6d5b4e"/><rect x="528" y="204" width="24" height="78" fill="#75645a"/>
<rect x="480" y="60" width="60" height="90" fill="#ece6db"/>
<path d="M562,150 h40 v280 h-40 q-14,-140 0,-280z" fill="#4f6240"/>
<path d="M30,298 L430,194 L445,214 L30,320 z" fill="#c9a078"/>
<path d="M30,320 L445,214 V232 L30,345 z" fill="#a67a56"/>
<path d="M235,262 L440,226 V372 H235 z" fill="#dfc8ad"/>
<rect x="292" y="306" width="78" height="13" fill="#f6efe4"/><rect x="300" y="328" width="60" height="10" fill="#f2e9dc"/>
<path d="M30,340 L235,290 V470 H30 z" fill="#c29a76"/>
<path d="M60,310 l14,-4 v160 h-14z M142,292 l16,-4 v180 h-16z M222,272 l16,-4 v200 h-16z" fill="#d5b08c"/>
<path d="M30,372 l48,-8 6,58 H30 z M88,362 l52,-9 4,62 -58,8 z M150,352 l70,-12 4,68 -78,12 z" fill="#8b1e2f"/>
<path d="M30,420 h50 v50 h-50z M88,420 h52 v48 h-52z M150,416 h72 v52 h-72z" fill="#5b4033"/>
<circle cx="72" cy="432" r="9" fill="#e9b36a"/><circle cx="180" cy="430" r="9" fill="#e9b36a"/><circle cx="228" cy="380" r="7" fill="#f0c27a"/>
<rect x="256" y="372" width="184" height="112" fill="#56463c"/>
<path d="M256,392 h184 M300,372 v112 M350,372 v112 M398,372 v112" stroke="#a8927c" stroke-width="6"/>
<rect x="264" y="400" width="30" height="40" fill="#9a6a4c"/><rect x="356" y="404" width="36" height="44" fill="#7d6654"/><rect x="310" y="430" width="30" height="40" fill="#8a7462"/>
<path d="M468,312 l52,30 8,56 -50,-10 z M526,336 l36,14 10,52 -40,-6 z" fill="#98283a"/>
<rect x="466" y="395" width="100" height="80" fill="#6a6650"/>
<rect x="20" y="552" width="600" height="90" fill="#dad4cb"/>
<path d="M30,480 q20,-24 46,-4 q20,-28 48,-2 q24,-30 56,-4 q24,-10 46,14 v60 H30 z" fill="#4e7a35"/>
<path d="M120,440 q14,-22 26,0 l-4,40 h-18z M200,430 q16,-16 28,4 l-4,36 h-20z" fill="#5d8a40"/>
<path d="M296,500 q16,-22 34,-2 q10,-14 24,0 q14,-26 38,-6 q14,-10 20,10 v50 h-116z" fill="#4c7a38"/>
<path d="M404,486 q24,-40 58,-8 q20,-30 50,-4 q26,-34 60,-8 q20,-6 30,10 v70 H404 z" fill="#4a7636"/>
<path d="M440,440 q10,-30 24,-4 l-2,40 h-20z M520,430 q30,-30 60,0 v50 h-60z" fill="#55803c"/>
<path d="M60,470 l10,-14 12,14z M160,486 l14,-16 14,16z M450,480 l14,-18 14,18z M540,492 l12,-14 12,14z M330,500 l10,-12 10,12z" fill="#8fb562"/>
<rect x="30" y="506" width="32" height="46" fill="#c75a20"/><rect x="68" y="504" width="34" height="50" fill="#d0642a"/><rect x="108" y="506" width="48" height="54" fill="#c85c22"/><rect x="164" y="506" width="58" height="56" fill="#cf6228"/>
<rect x="232" y="496" width="54" height="50" fill="#3a322c"/>
<path d="M300,526 h26 l-4,50 h-18z M374,536 h28 l-4,46 h-20z M334,556 h22 l-3,26 h-16z" fill="#de8a5e"/>
<rect x="412" y="508" width="52" height="70" fill="#cb5f24"/>
<path d="M504,520 h26 l-4,52 h-18z" fill="#dd875a"/><path d="M540,534 h20 l-3,28 h-14z M566,530 h20 l-3,26 h-14z" fill="#cf6d3c"/>
</g></g></g><path d="M448.4,560.8 l-6,2.4 2.6,.8 .7,2.7 z" fill="none" stroke="#444" stroke-width=".7" stroke-linejoin="round"/><path d="M442.79999999999995,572.6 q-.5,4 4.6,5.6 l1.2,-1.4 -1.6,-1.1 -.9,.6 q-1.4,-.8 -1.7,-2.4 l.8,-.6 -.8,-1.7 z" fill="#6a6a6a"/><path d="M446.0,572.1999999999999 a3,3 0 0 1 2.8,2.8 M446.0,573.8 a1.4,1.4 0 0 1 1.3,1.3" fill="none" stroke="#555" stroke-width=".6"/><circle cx="445.4" cy="586.1999999999999" r="3" fill="none" stroke="#555" stroke-width=".7"/><path d="M445.4,584.4 v2 h1.6" fill="none" stroke="#555" stroke-width=".6"/><path d="M477.4,599.6999999999999 h4.2 M480,598.0 l1.7,1.7 -1.7,1.7" fill="none" stroke="#fff" stroke-width=".7"/><clipPath id="mc"><rect x="724.2" y="318.2" width="520.0999999999999" height="319.8"/></clipPath><g clip-path="url(#mc)"><rect x="724.2" y="318.2" width="520.0999999999999" height="319.8" fill="#fee8dc"/><path d="M981.5,318 L1019.5,478 L1058,638 H1250 V318 z" fill="#f0dacd"/><path d="M1128.7,543.2 L1150.5,540.0 L1158.3,549.0 L1176.1,575.3 L1199.7,599.6 L1199.7,641.0 L1059.3,641.0 L1054.7,615.7 L1111.6,585.0 L1127.4,570.4 L1126.2,551.0 z" fill="#fee8dc"/><path d="M1196.7,397.4 L1247.8,419.6 L1247.8,439.0 L1202.2,422.2 L1178.5,479.5 L1160.2,488.6 L1150,489.5 L1128,496 L1122,491.5 L1154.7,477.6 L1184.8,413.8 z" fill="#fee8dc"/><path d="M1028.4,523.2 L1116.5,496.0 L1153.0,486.3 L1165.1,480.4" fill="none" stroke="#fee8dc" stroke-width="3.2"/><path d="M1108.7,478.0 L1120.1,514.5 L1127.4,551.0 L1127.4,570.4" fill="none" stroke="#fee8dc" stroke-width="2.8"/><path d="M1043.5,577.7 L1094.6,558.3 L1096.5,548.5" fill="none" stroke="#f6e1d5" stroke-width="1.6"/><path d="M1075.1,518.1 L1092.2,530.3 L1096.5,548.5" fill="none" stroke="#f6e1d5" stroke-width="1.4"/><path d="M1075.1,318.0 L1082.4,336.2 L1111.6,366.6 L1244.2,416.5" fill="none" stroke="#f6e3d8" stroke-width="2.2" stroke-linejoin="round" stroke-linecap="round" opacity=".6"/><path d="M1031.4,353.3 L1065.4,354.5 L1082.4,336.2" fill="none" stroke="#f6e3d8" stroke-width="2.2" stroke-linejoin="round" stroke-linecap="round" opacity=".6"/><path d="M1065.4,354.5 L1060.5,378.8 L1070.3,383.7 L1073.9,393.4 L1060.5,404.4 L1045.9,400.7 L1044.7,388.5 L1060.5,378.8" fill="none" stroke="#f6e3d8" stroke-width="2.2" stroke-linejoin="round" stroke-linecap="round" opacity=".6"/><path d="M1143.2,325.3 L1111.6,366.6 L1089.7,420.2 L1109.2,454.2 L1108.7,478.1" fill="none" stroke="#f6e3d8" stroke-width="2.2" stroke-linejoin="round" stroke-linecap="round" opacity=".6"/><path d="M1126.2,344.8 L1206.5,373.9 L1244.2,322.9" fill="none" stroke="#f6e3d8" stroke-width="2.2" stroke-linejoin="round" stroke-linecap="round" opacity=".6"/><path d="M1177.3,318.0 L1223.5,347.2" fill="none" stroke="#f6e3d8" stroke-width="2.2" stroke-linejoin="round" stroke-linecap="round" opacity=".6"/><path d="M1206.5,373.9 L1198.0,391.0" fill="none" stroke="#f6e3d8" stroke-width="2.2" stroke-linejoin="round" stroke-linecap="round" opacity=".6"/><path d="M1133.5,531.5 L1153.0,532.0 L1159.1,541.2 L1176.1,575.3 L1199.7,599.6" fill="none" stroke="#f6e4d9" stroke-width="2" stroke-linejoin="round" opacity=".8"/><path d="M1174.9,492.6 L1177.3,538.8 L1187.0,559.5 L1244.2,548.5" fill="none" stroke="#f6e4d9" stroke-width="2" stroke-linejoin="round" opacity=".8"/><path d="M1187.0,559.5 L1216.2,580.2 L1244.2,585.0" fill="none" stroke="#f6e4d9" stroke-width="2" stroke-linejoin="round" opacity=".8"/><path d="M1226.0,487.7 L1235.7,546.1" fill="none" stroke="#f6e4d9" stroke-width="2" stroke-linejoin="round" opacity=".8"/><path d="M1201.6,439.6 L1204.1,425.0 L1244.2,432.3" fill="none" stroke="#f6e4d9" stroke-width="2" stroke-linejoin="round" opacity=".8"/><path d="M1132.3,551.0 L1145.7,546.1 L1148.6,553.4 L1136.0,566.8 L1132.3,551.0" fill="none" stroke="#ecd7c9" stroke-width="1.9" stroke-linejoin="round"/><path d="M1136.0,566.8 L1145.7,589.9 L1170.0,605.7 L1176.1,575.3" fill="none" stroke="#ecd7c9" stroke-width="1.9" stroke-linejoin="round"/><path d="M1145.7,589.9 L1133.5,609.4 L1150.5,623.9 L1155.4,638.1" fill="none" stroke="#ecd7c9" stroke-width="1.9" stroke-linejoin="round"/><path d="M958.9,318 L996.9,478 L1035.4,638" fill="none" stroke="#f3d9cb" stroke-width=".9"/><path d="M964.9,318 L1002.9,478 L1041.4,638" fill="none" stroke="#f6ddd0" stroke-width=".9"/><path d="M970.3,318 L1008.3,478 L1046.8,638" fill="none" stroke="#f6ddd0" stroke-width=".9"/><path d="M975.4,318 L1013.4,478 L1051.9,638" fill="none" stroke="#f5dccf" stroke-width=".9"/><path d="M967.6,318 L1005.6,478 L1044.1,638" fill="none" stroke="#dfc3b6" stroke-width="1" stroke-dasharray="1.3 3"/><path d="M1004.1,485.6 L963.1,499.3 L946.4,504.4 L858.3,512.9 L764.1,577.3 L735.2,554 L722,534" fill="none" stroke="#ead5c7" stroke-width="1.9" stroke-linejoin="round"/><path d="M764.1,577.3 L786.2,591.9 L776.2,608.6 L751.9,628.4 L722,611" fill="none" stroke="#ead5c7" stroke-width="1.9" stroke-linejoin="round"/><path d="M735.2,554 L724.6,595" fill="none" stroke="#ead5c7" stroke-width="1.9" stroke-linejoin="round"/><path d="M751.9,628.4 L757.5,640" fill="none" stroke="#ead5c7" stroke-width="1.9" stroke-linejoin="round"/><g font-family="'Liberation Sans','Noto Sans CJK SC',sans-serif"><text x="1134.3" y="325.8" font-size="7.2" fill="#c2a999" font-weight="400" text-anchor="middle" dominant-baseline="central" >谷底公园</text><text x="1042.3" y="335" font-size="5.2" fill="#c2a999" font-weight="400" text-anchor="middle" dominant-baseline="central" >3栋</text><text x="1182.2" y="336.7" font-size="5.2" fill="#c2a999" font-weight="400" text-anchor="middle" dominant-baseline="central" >28幢</text><text x="1162.2" y="361" font-size="5.6" fill="#c2a999" font-weight="400" text-anchor="middle" dominant-baseline="central" >牡丹苑27-</text><text x="1162.2" y="368.6" font-size="5.6" fill="#c2a999" font-weight="400" text-anchor="middle" dominant-baseline="central" >A-102号楼</text><text x="1101.4" y="387.1" font-size="7.3" fill="#c2a999" font-weight="400" text-anchor="middle" dominant-baseline="central" >喜洋洋超市</text><text x="1027" y="410.7" font-size="7" fill="#c2a999" font-weight="400" text-anchor="middle" dominant-baseline="central" >川音大地综</text><text x="1027" y="419.2" font-size="7" fill="#c2a999" font-weight="400" text-anchor="middle" dominant-baseline="central" >艺音乐学校</text><text x="1082.9" y="431.4" font-size="7" fill="#c2a999" font-weight="400" text-anchor="middle" dominant-baseline="central" >阳光按摩浴足</text><text x="1019.2" y="447.7" font-size="7" fill="#c2a999" font-weight="400" text-anchor="middle" dominant-baseline="central" >朝文名师堂</text><text x="1119.4" y="461" font-size="6.8" fill="#c2a999" font-weight="400" text-anchor="middle" dominant-baseline="central" >橡树汇长</text><text x="1119.4" y="470.8" font-size="6.8" fill="#c2a999" font-weight="400" text-anchor="middle" dominant-baseline="central" >者专顾中心</text><text x="1220.6" y="450.6" font-size="5.6" fill="#c2a999" font-weight="400" text-anchor="middle" dominant-baseline="central" >华润·幸福</text><text x="1220.6" y="458.4" font-size="5.6" fill="#c2a999" font-weight="400" text-anchor="middle" dominant-baseline="central" >里二期2栋</text><text x="1189" y="528.6" font-size="6.8" fill="#c2a999" font-weight="400" text-anchor="middle" dominant-baseline="central" >就是蛋糕</text><text x="1225" y="555.8" font-size="7.3" fill="#c2a999" font-weight="400" text-anchor="middle" dominant-baseline="central" >华润幸福里2</text><text x="1204" y="584" font-size="5.6" fill="#c2a999" font-weight="400" text-anchor="middle" dominant-baseline="central" >华润·幸福</text><text x="1204" y="591.8" font-size="5.6" fill="#c2a999" font-weight="400" text-anchor="middle" dominant-baseline="central" >里二期6栋</text><text x="1091" y="578" font-size="7" fill="#c2a999" font-weight="400" text-anchor="middle" dominant-baseline="central" >知了汇茶艺馆</text><text x="1123.8" y="628.3" font-size="7" fill="#c2a999" font-weight="400" text-anchor="middle" dominant-baseline="central" >如家酒店</text><text x="1177.3" y="618.4" font-size="6.9" fill="#c2a999" font-weight="400" text-anchor="middle" dominant-baseline="central" >四川汇普装饰</text><text x="1177.3" y="627.1" font-size="6.9" fill="#c2a999" font-weight="400" text-anchor="middle" dominant-baseline="central" >材料有限公司</text><text x="1240" y="619" font-size="7" fill="#c2a999" font-weight="400" text-anchor="middle" dominant-baseline="central" >天天</text><text x="1149.5" y="417.7" font-size="7" fill="#c2a999" font-weight="400" text-anchor="middle" dominant-baseline="central" >万顺五金</text><text x="1068" y="545" font-size="6.8" fill="#c2a999" font-weight="400" text-anchor="middle" dominant-baseline="central" >万科城市花园1期</text><text x="1196.3" y="402.6" font-size="5.9" fill="#554a42" font-weight="700" text-anchor="middle" dominant-baseline="central" >万科城市花</text><text x="1196.3" y="411.2" font-size="5.9" fill="#554a42" font-weight="700" text-anchor="middle" dominant-baseline="central" >园(南1门)</text><text x="1100" y="508.2" font-size="5.9" fill="#554a42" font-weight="700" text-anchor="middle" dominant-baseline="central" >西南2门</text><text x="1070.8" y="619.8" font-size="5.9" fill="#554a42" font-weight="700" text-anchor="middle" dominant-baseline="central" >西南1门</text><text x="1001.7" y="473.7" font-size="8.4" fill="#8f8780" font-weight="500" text-anchor="middle" dominant-baseline="central" transform="rotate(-14 1001.7 473.7)">静</text><text x="1005.8" y="483.6" font-size="8.4" fill="#8f8780" font-weight="500" text-anchor="middle" dominant-baseline="central" transform="rotate(-14 1005.8 483.6)">安</text><text x="1008.4" y="493.6" font-size="8.4" fill="#8f8780" font-weight="500" text-anchor="middle" dominant-baseline="central" transform="rotate(-14 1008.4 493.6)">路</text><text x="1039" y="615.4" font-size="8.4" fill="#8f8780" font-weight="500" text-anchor="middle" dominant-baseline="central" transform="rotate(-14 1039 615.4)">静</text><text x="1043.2" y="624.2" font-size="8.4" fill="#8f8780" font-weight="500" text-anchor="middle" dominant-baseline="central" transform="rotate(-14 1043.2 624.2)">安</text><text x="1046" y="632.8" font-size="8.4" fill="#8f8780" font-weight="500" text-anchor="middle" dominant-baseline="central" transform="rotate(-14 1046 632.8)">路</text></g><circle cx="1196.3" cy="392.2" r="4.3" fill="#a9a3ad"/><circle cx="1196.3" cy="392.2" r="2.9" fill="none" stroke="#efe9ee" stroke-width=".7"/><rect x="1195.1" y="390.7" width="2.4" height="3" fill="none" stroke="#efe9ee" stroke-width=".6"/><circle cx="1100" cy="498.7" r="4.3" fill="#a9a3ad"/><circle cx="1100" cy="498.7" r="2.9" fill="none" stroke="#efe9ee" stroke-width=".7"/><rect x="1098.8" y="497.2" width="2.4" height="3" fill="none" stroke="#efe9ee" stroke-width=".6"/><circle cx="1070.8" cy="610" r="4.3" fill="#a9a3ad"/><circle cx="1070.8" cy="610" r="2.9" fill="none" stroke="#efe9ee" stroke-width=".7"/><rect x="1069.6" y="608.5" width="2.4" height="3" fill="none" stroke="#efe9ee" stroke-width=".6"/><circle cx="1149.3" cy="407" r="4.2" fill="#fff" stroke="#a85fd8" stroke-width="1.2"/><path d="M1147.2,406 h4.2 v2.4 h-4.2 z" fill="none" stroke="#a85fd8" stroke-width=".8"/><circle cx="1067.8" cy="534.4" r="4.6" fill="#45a9dc"/><rect x="1066" y="531.8" width="2.8" height="5" fill="#e8f6ff"/><rect x="1068.8" y="533.4" width="1.6" height="3.4" fill="#bfe4f8"/><rect x="1017.2" y="524.4" width="9" height="4.6" rx="2.3" fill="#fff7e6" stroke="#8a8578" stroke-width=".6"/><circle cx="1019.4" cy="526.7" r="1" fill="#e9483c"/><circle cx="1021.7" cy="526.7" r="1" fill="#f1bd2e"/><circle cx="1024" cy="526.7" r="1" fill="#4caf50"/><path d="M977,374.7 l.8,3.6" stroke="#6d5d55" stroke-width=".7"/><path d="M1072.6,391.8 l.8,3.6" stroke="#6d5d55" stroke-width=".7"/><path d="M1015.4,461.0 l.8,3.6" stroke="#6d5d55" stroke-width=".7"/><path d="M1023,511.2 l.8,3.6" stroke="#6d5d55" stroke-width=".7"/><path d="M1032.6,584.8000000000001 l.8,3.6" stroke="#6d5d55" stroke-width=".7"/><path d="M1178.8,539.0 l.8,3.6" stroke="#6d5d55" stroke-width=".7"/><path d="M1073,516.8000000000001 l.8,3.6" stroke="#6d5d55" stroke-width=".7"/><path d="M983.8,497.2 C981.6,493.6 979.8,492 979.8,489.6 a4,4 0 0 1 8,0 C987.8,492 986,493.6 983.8,497.2 z" fill="#e60012"/><circle cx="983.8" cy="489.6" r="1.7" fill="#fff"/></g></svg>
</div></div>
<svg class="a" style="left:0;top:0" width="1723" height="658" viewBox="0 0 1723 658"><g fill="none" stroke="#ffc000" stroke-width="4" stroke-linecap="round"><ellipse cx="1410.1" cy="76.9" rx="23" ry="22"/><path d="M1402.2,106.9 h16 M1406,114.8 h8.1" stroke-width="3.8"/><path d="M1379.7,54.7 l8,3.7 M1380.1,64.9 h3.7 M1432.8,58.2 l7.8,-3.6 M1436.5,64.9 h3.9" stroke-width="3.6"/><path d="M1411.6,61.2 A15.8,15.8 0 0 1 1423.8,69.1" stroke-width="3.3"/></g><path d="M1523.95,140 h32.1 v29 h15.899999999999999 L1540,199 L1508.05,169 h15.899999999999999 z" fill="#66e697"/><path d="M1401.0,395.9 h33 v29.1 h16.049999999999997 L1417.5,454.0 L1384.95,425.0 h16.049999999999997 z" fill="#66e697"/><path d="M1521.9,395.9 h32.2 v29.1 h16.199999999999996 L1538,454.0 L1505.7,425.0 h16.199999999999996 z" fill="#66e697"/><path d="M1642.8000000000002,395.9 h32.2 v29.1 h15.949999999999996 L1658.9,454.0 L1626.8500000000001,425.0 h15.949999999999996 z" fill="#66e697"/><ellipse cx="1540" cy="284.3" rx="75" ry="77.1" fill="#0964d2"/></svg>
<div class="t" style="left:1474.2px;top:86.4px;font-size:36.8px;color:#000;transform:translateY(calc(-50% + .055em)) scaleY(1.06)">康养机构</div>
<div class="tc b" style="left:1539.8px;top:265.2px;font-size:32.9px;color:#fff;">康养</div>
<div class="tc b" style="left:1539.8px;top:305px;font-size:32.9px;color:#fff;">平台</div>
<div class="a b" style="left:1398.6px;top:485.5px;width:40px;text-align:center;font-size:37.3px;line-height:36.15px;color:#222">机<br>构<br>建<br>档</div>
<div class="a b" style="left:1519.5px;top:485.5px;width:40px;text-align:center;font-size:37.3px;line-height:36.15px;color:#222">机<br>构<br>监<br>管</div>
<div class="a b" style="left:1640.1px;top:485.5px;width:40px;text-align:center;font-size:37.3px;line-height:36.15px;color:#222">服<br>务<br>监<br>管</div>
</body></html>
